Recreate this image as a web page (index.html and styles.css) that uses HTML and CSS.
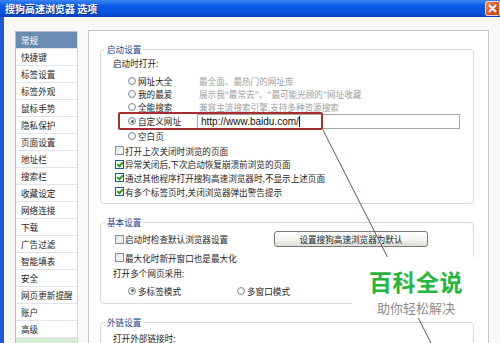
FILE: index.html
```html
<!DOCTYPE html>
<html>
<head>
  <title>搜狗高速浏览器 选项</title>
  <link rel="stylesheet" href="styles.css">
</head>
<body>
  <div class="window">
    <div class="titlebar">
      <span class="title">搜狗高速浏览器 选项</span>
      <span class="close">
        <svg width="9" height="9" viewBox="0 0 9 9"><path d="M1 1 L8 8 M8 1 L1 8" stroke="#fff" stroke-width="1.8"/></svg>
      </span>
    </div>

    <div class="frame">
      <ul class="nav">
        <li class="active">常规</li>
        <li>快捷键</li>
        <li>标签设置</li>
        <li>标签外观</li>
        <li>鼠标手势</li>
        <li>隐私保护</li>
        <li>页面设置</li>
        <li>地址栏</li>
        <li>搜索栏</li>
        <li>收藏设定</li>
        <li>网络连接</li>
        <li>下载</li>
        <li>广告过滤</li>
        <li>智能填表</li>
        <li>安全</li>
        <li>网页更新提醒</li>
        <li>账户</li>
        <li>高级</li>
        <li class="more"></li>
      </ul>

      <div class="panel">
        <!-- 启动设置 -->
        <fieldset class="group startup">
          <legend>启动设置</legend>
          <div class="caption first">启动时打开:</div>
          <div class="opt"><span class="radio"></span><span class="name">网址大全</span><span class="desc">最全面、最热门的网址库</span></div>
          <div class="opt"><span class="radio"></span><span class="name">我的最爱</span><span class="desc">展示我"最常去"、"最可能光顾的"网址收藏</span></div>
          <div class="opt"><span class="radio"></span><span class="name">全能搜索</span><span class="desc">兼容主流搜索引擎,支持多种资源搜索</span></div>
          <div class="opt url-row"><span class="radio on"></span><span class="name">自定义网址</span><span class="url">http://www.baidu.com/<i class="caret"></i></span></div>
          <div class="opt"><span class="radio"></span><span class="name">空白页</span></div>
          <div class="checks">
            <div class="check"><span class="box"></span>打开上次关闭时浏览的页面</div>
            <div class="check"><span class="box on"></span>异常关闭后,下次启动恢复崩溃前浏览的页面</div>
            <div class="check"><span class="box on"></span>通过其他程序打开搜狗高速浏览器时,不显示上述页面</div>
            <div class="check"><span class="box on"></span>有多个标签页时,关闭浏览器弹出警告提示</div>
          </div>
        </fieldset>

        <!-- 基本设置 -->
        <fieldset class="group basic">
          <legend>基本设置</legend>
          <div class="check first"><span class="box"></span>启动时检查默认浏览器设置<button class="btn">设置搜狗高速浏览器为默认</button></div>
          <div class="check"><span class="box"></span>最大化时新开窗口也是最大化</div>
          <div class="caption">打开多个网页采用:</div>
          <div class="mode-row">
            <span class="mode"><span class="radio on"></span>多标签模式</span>
            <span class="mode"><span class="radio"></span>多窗口模式</span>
          </div>
        </fieldset>

        <!-- 外链设置 -->
        <fieldset class="group links">
          <legend>外链设置</legend>
          <div class="caption first">打开外部链接时:</div>
        </fieldset>
      </div>
    </div>

    <svg class="annot-line" width="500" height="343"><line x1="323" y1="130" x2="431" y2="343" stroke="#6e5252" stroke-width="1"/></svg>
    <div class="annot-box"></div>

    <div class="watermark">
      <div class="wm-title">百科全说</div>
      <div class="wm-sub">助你轻松解决</div>
    </div>
  </div>
</body>
</html>
```

FILE: styles.css
```css
body {
  margin: 0;
  font-family: "Noto Sans CJK SC", "Liberation Sans", sans-serif;
  font-size: 8.6px;
  color: #1e1e1e;
  background: #f8f8f6;
}

.window {
  position: relative;
  width: 500px;
  height: 343px;
  overflow: hidden;
  background: #f8f8f6;
}

/* title bar */
.titlebar {
  height: 17px;
  display: flex;
  align-items: center;
  justify-content: space-between;
  background: linear-gradient(#3a86f2, #0b5be4 35%, #0550dc 80%, #0a3fb8);
}

.title {
  margin-left: 5px;
  color: #fff;
  font-weight: 700;
  font-size: 10px;
  line-height: 17px;
  text-shadow: 1px 1px 0 #0a2f8a;
}

.close {
  width: 15px;
  height: 15px;
  margin-top: -1px;
  display: flex;
  align-items: center;
  justify-content: center;
  box-sizing: border-box;
  border: 1px solid #f2d2c4;
  border-radius: 2px;
  background: linear-gradient(135deg, #e98a5e, #d4562e 60%, #c0461e);
}

.frame {
  display: flex;
  align-items: flex-start;
  height: 326px;
  padding: 14px 0 0 11px;
  border-left: 4px solid #1d58d8;
  box-sizing: border-box;
}

/* category list */
.nav {
  list-style: none;
  margin: 0;
  padding: 0;
  width: 63px;
  box-sizing: border-box;
  border: 1px solid #b3c1cf;
  border-right-color: #cfdccb;
  background: #fff;
}

.nav li {
  height: 16px;
  line-height: 16px;
  padding-left: 5px;
  border-bottom: 1px solid #dfe5ea;
  white-space: nowrap;
}

.nav li.active {
  background: #6b8bb0;
  color: #fff;
}

.nav li.more {
  background: #d9ecd4;
}

/* main panel */
.panel {
  width: 401px;
  height: 330px;
  margin: -1px 0 0 10px;
  padding-top: 12px;
  box-sizing: border-box;
  border: 1px solid #c6c6c6;
  background: #fff;
}

.group {
  margin: 0 14px 0 11px;
  padding: 0 0 0 12px;
  border: 1px solid #d8d8d8;
  border-radius: 4px;
  min-width: 0;
}

.group legend {
  margin-left: -8px;
  padding: 0 2px;
  height: 12px;
  line-height: 12px;
  color: #1f4393;
}

.group.basic,
.group.links {
  margin-top: 12px;
}

.startup {
  padding-bottom: 5px;
}

.basic {
  padding-bottom: 6px;
}

.caption {
  height: 13px;
  line-height: 13px;
  margin-top: 3px;
}

.caption.first {
  margin-top: 2px;
}

.links .caption.first {
  margin-top: 4px;
}

/* radio options */
.opt {
  display: flex;
  align-items: center;
  height: 13px;
  padding-left: 15px;
}

.opt:nth-of-type(2) {
  margin-top: 4px;
}

.radio {
  width: 8px;
  height: 8px;
  flex: none;
  box-sizing: border-box;
  border: 1px solid #7d8c9e;
  border-radius: 50%;
  background: radial-gradient(#fff, #e8ebee);
  margin-right: 2px;
  position: relative;
}

.radio.on::after {
  content: "";
  position: absolute;
  left: 1.5px;
  top: 1.5px;
  width: 3px;
  height: 3px;
  border-radius: 50%;
  background: #3f7c3a;
}

.name {
  width: 61px;
  flex: none;
}

.desc {
  color: #a0a0a0;
  white-space: nowrap;
}

.url-row {
  height: 16px;
}

.url {
  display: flex;
  align-items: center;
  width: 263px;
  height: 15px;
  margin-left: -2px;
  padding-left: 3px;
  box-sizing: border-box;
  border: 1px solid #a6a6a6;
  font-family: "Liberation Sans", sans-serif;
  font-size: 10px;
  color: #111;
}

.caret {
  width: 1px;
  height: 11px;
  background: #111;
}

/* checkboxes */
.checks {
  margin-top: 2px;
}

.check {
  display: flex;
  align-items: center;
  height: 13.6px;
  padding-left: 2px;
  white-space: nowrap;
}

.box {
  width: 9px;
  height: 9px;
  flex: none;
  box-sizing: border-box;
  border: 1px solid #8190a2;
  background: linear-gradient(135deg, #e4e4e0, #fafafa);
  margin-right: 1px;
  position: relative;
}

.box.on {
  border-color: #1e5a86;
  background: #fff;
}

.box.on::after {
  content: "";
  position: absolute;
  left: 2px;
  top: 0px;
  width: 2px;
  height: 4px;
  border: solid #22a022;
  border-width: 0 2px 2px 0;
  transform: rotate(40deg);
}

.basic .check.first {
  height: 16px;
  margin-top: 3px;
}

.basic .check {
  margin-top: 3.5px;
}

.btn {
  margin: 0 45px 0 auto;
  width: 154px;
  height: 16px;
  padding: 0;
  font-family: inherit;
  font-size: 8.6px;
  color: #1e1e1e;
  border: 1px solid #7a7a7a;
  border-radius: 3px;
  background: linear-gradient(#ffffff, #f2f2ee 60%, #dcdcd6);
}

.mode-row {
  display: flex;
  align-items: center;
  height: 13px;
  margin-top: 4px;
  padding-left: 15px;
}

.mode {
  display: flex;
  align-items: center;
  width: 109px;
}

/* annotation overlays */
.annot-line {
  position: absolute;
  left: 0;
  top: 0;
}

.annot-box {
  position: absolute;
  left: 118px;
  top: 112px;
  width: 205px;
  height: 18px;
  box-sizing: border-box;
  border: 2px solid #a92c2e;
  border-radius: 2px;
}

.watermark {
  position: absolute;
  left: 352px;
  top: 257px;
  width: 128px;
  height: 61px;
  background: #fff;
  text-align: center;
}

.wm-title {
  margin-top: 13px;
  font-size: 23px;
  font-weight: 700;
  line-height: 23px;
  color: #26b53d;
  letter-spacing: 0.5px;
}

.wm-sub {
  margin-top: 8px;
  font-size: 13px;
  line-height: 14px;
  color: #8c8c8c;
}
```
